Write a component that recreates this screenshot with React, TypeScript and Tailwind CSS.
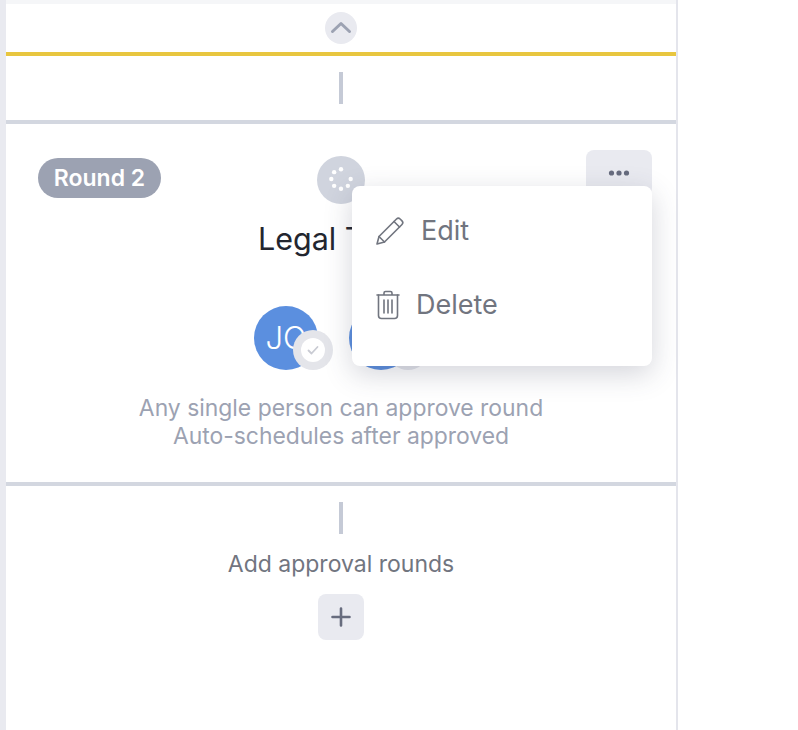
import React from 'react';

const font = { fontFamily: '"Inter", "Noto Sans", sans-serif' };

function Connector() {
    return <div className="w-1 h-8 bg-[#c5cad6]" />;
}

function Avatar({ initials }: { initials: string }) {
    return (
        <div className="relative w-[79px] h-16">
            <div className="w-16 h-16 rounded-full bg-[#5b8fdf] text-white text-[31px] font-light flex items-center justify-center overflow-hidden">
                {initials}
            </div>
            <div className="absolute left-[39px] top-6 w-10 h-10 rounded-full bg-[#e4e5ea] flex items-center justify-center">
                <div className="w-6 h-6 rounded-full bg-white flex items-center justify-center">
                    <svg width="14" height="14" viewBox="0 0 14 14" fill="none" stroke="#c9cbd3" strokeWidth="1.8" strokeLinecap="round" strokeLinejoin="round">
                        <path d="M2.5 7.5 5.5 10.5 11.5 4" />
                    </svg>
                </div>
            </div>
        </div>
    );
}

function SpinnerDots() {
    const dots = [0, 1, 2, 3, 4, 5, 6];
    return (
        <svg width="28" height="28" viewBox="0 0 28 28" fill="#fff">
            {dots.map(i => {
                const a = (i * Math.PI) / 4;
                return <circle key={i} cx={14 + 9.7 * Math.cos(a)} cy={13 + 9.7 * Math.sin(a)} r={2.2} />;
            })}
        </svg>
    );
}

function RoundCard() {
    return (
        <div className="relative h-[358px] flex flex-col items-center">
            <div className="w-full grid grid-cols-[1fr_auto_1fr] px-6 pt-[26px]">
                <div className="flex items-start">
                    <span className="ml-2 mt-2 h-10 w-[123px] rounded-full bg-[#9ca2b2] text-white text-[23px] font-semibold flex items-center justify-center">
                        Round 2
                    </span>
                </div>
                <div className="mt-1.5 w-12 h-12 rounded-full bg-[#d0d4de] flex items-center justify-center">
                    <SpinnerDots />
                </div>
                <div className="flex justify-end items-start">
                    <div className="w-[66px] h-[46px] rounded-lg bg-[#e9eaf0] flex items-center justify-center">
                        <svg width="22" height="6" viewBox="0 0 22 6" fill="#676c7e">
                            <circle cx="3.5" cy="3" r="2.6" />
                            <circle cx="11" cy="3" r="2.6" />
                            <circle cx="18.5" cy="3" r="2.6" />
                        </svg>
                    </div>
                </div>
            </div>

            <h2 className="mt-[15px] text-[30.5px] leading-10 font-normal text-[#23262f]">Legal Team</h2>

            <div className="mt-[47px] flex gap-4">
                <Avatar initials="JO" />
                <Avatar initials="JO" />
            </div>

            <p className="mt-6 text-center text-[22.9px] leading-7 text-[#9ca2b2]">
                Any single person can approve round
                <br />
                Auto-schedules after approved
            </p>

            {/* open menu, sits over the card */}
            <div className="absolute left-[346px] top-[62px] w-[300px] h-[180px] bg-white rounded-lg shadow-[0_8px_28px_rgba(60,65,90,0.22)] text-[#71757f] text-[27px]">
                <div className="flex items-center h-10 mt-[25px] pl-[23px]">
                    <svg width="30" height="30" viewBox="0 0 30 30" fill="none" stroke="#71757f" strokeWidth="1.6" strokeLinejoin="round" strokeLinecap="round">
                        <path d="M2 28 4 20.5 21.5 3a2.6 2.6 0 0 1 3.6 0l1.9 1.9a2.6 2.6 0 0 1 0 3.6L9.5 26Z" />
                        <path d="M4 20.5 9.5 26M19 5.5 24.5 11" />
                    </svg>
                    <span className="ml-4">Edit</span>
                </div>
                <div className="flex items-center h-10 mt-[34px] pl-[24px]">
                    <svg width="24" height="30" viewBox="0 0 24 30" fill="none" stroke="#71757f" strokeWidth="1.6" strokeLinejoin="round" strokeLinecap="round">
                        <path d="M1 5h22M8 5V3a1.5 1.5 0 0 1 1.5-1.5h5A1.5 1.5 0 0 1 16 3v2" />
                        <path d="M2.5 5v20.5A3 3 0 0 0 5.5 28.5h13a3 3 0 0 0 3-3V5" />
                        <path d="M8 10v13M12 10v13M16 10v13" />
                    </svg>
                    <span className="ml-4">Delete</span>
                </div>
            </div>
        </div>
    );
}

export default function App() {
    return (
        <div className="flex w-[798px] h-[730px] bg-white overflow-hidden" style={font}>
            <div className="w-[6px] bg-[#e9eaf0]" />
            <div className="w-[672px] border-r-2 border-[#e4e5ec] flex flex-col">
                <div className="h-1 bg-[#f5f6f8]" />
                <div className="h-12 flex items-center justify-center">
                    <div className="w-8 h-8 rounded-full bg-[#e9eaf0] flex items-center justify-center">
                        <svg className="-mt-0.5" width="22" height="14" viewBox="0 0 22 14" fill="none" stroke="#9ca2b2" strokeWidth="3" strokeLinecap="round" strokeLinejoin="round">
                            <path d="M2.5 11.5 11 3.5l8.5 8" />
                        </svg>
                    </div>
                </div>
                <div className="h-1 bg-[#e8c63f]" />
                <div className="py-4 flex justify-center">
                    <Connector />
                </div>
                <div className="h-1 bg-[#d3d7e0]" />
                <RoundCard />
                <div className="h-1 bg-[#d3d7e0]" />
                <div className="pt-4 flex flex-col items-center">
                    <Connector />
                    <p className="mt-4 text-[23px] leading-7 text-[#71757f]">Add approval rounds</p>
                    <div className="mt-4 w-[46px] h-[46px] rounded-lg bg-[#e9eaf0] flex items-center justify-center">
                        <svg width="20" height="20" viewBox="0 0 20 20" fill="none" stroke="#676c7e" strokeWidth="2.6" strokeLinecap="round">
                            <path d="M10 1.5v17M1.5 10h17" />
                        </svg>
                    </div>
                </div>
            </div>
        </div>
    );
}
